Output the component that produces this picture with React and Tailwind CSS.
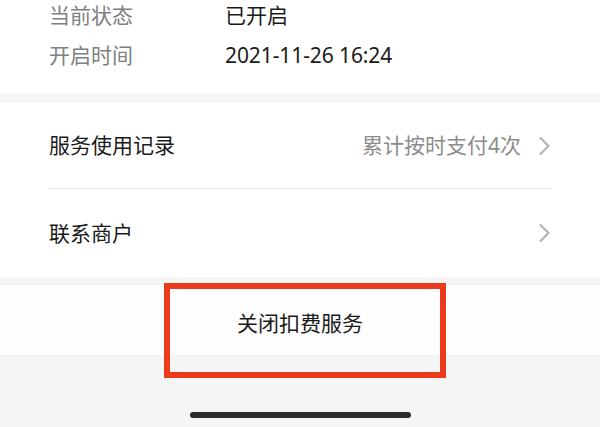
import React from 'react';

function Chevron() {
  return (
    <svg width="13" height="22" viewBox="0 0 13 22" className="shrink-0">
      <path d="M2.5 3 L10.5 11 L2.5 19" fill="none" stroke="#b3b3b3" strokeWidth="2.2" strokeLinecap="round" strokeLinejoin="round" />
    </svg>
  );
}

export default function App() {
  const font = { fontFamily: '"Noto Sans", "Noto Sans CJK SC", sans-serif' };
  return (
    <div className="w-[600px] h-[427px] overflow-hidden bg-[#f5f5f5] flex flex-col" style={font}>
      {/* 状态信息 */}
      <div className="bg-white h-[93px] flex flex-col pl-[49px]">
        <div className="h-[30px] flex items-center">
          <span className="w-[176px] text-[21px] leading-none text-[#808080]">当前状态</span>
          <span className="text-[21px] leading-none text-[#1a1a1a]">已开启</span>
        </div>
        <div className="h-[50px] flex items-center">
          <span className="w-[176px] text-[21px] leading-none text-[#808080]">开启时间</span>
          <span className="text-[21px] leading-none text-[#1a1a1a] tracking-[-0.1px]">2021-11-26 16:24</span>
        </div>
      </div>

      <div className="h-[10px]" />

      {/* 列表 */}
      <div className="bg-white h-[174px] flex flex-col pl-[49px] pr-[49px]">
        <div className="h-[86px] flex items-center justify-between border-b border-[#ececec]">
          <span className="text-[21px] leading-none text-[#1a1a1a]">服务使用记录</span>
          <div className="flex items-center gap-[17px]">
            <span className="text-[21px] leading-none text-[#8c8c8c]">累计按时支付4次</span>
            <Chevron />
          </div>
        </div>
        <div className="h-[88px] flex items-center justify-between">
          <span className="text-[21px] leading-none text-[#1a1a1a]">联系商户</span>
          <Chevron />
        </div>
      </div>

      <div className="h-[8px]" />

      {/* 关闭按钮 */}
      <div className="relative bg-[#fdfdfd] h-[70px] flex items-center justify-center">
        <span className="text-[21px] leading-none text-[#1a1a1a] pt-[6px]">关闭扣费服务</span>
        <div className="absolute left-[164px] top-[-2px] w-[282px] h-[95px] border-[6px] border-[#ec3a1c]" />
      </div>

      <div className="flex-1 flex items-end justify-center pb-[9px]">
        <div className="w-[221px] h-[6px] rounded-full bg-[#2b2b2b]" />
      </div>
    </div>
  );
}
